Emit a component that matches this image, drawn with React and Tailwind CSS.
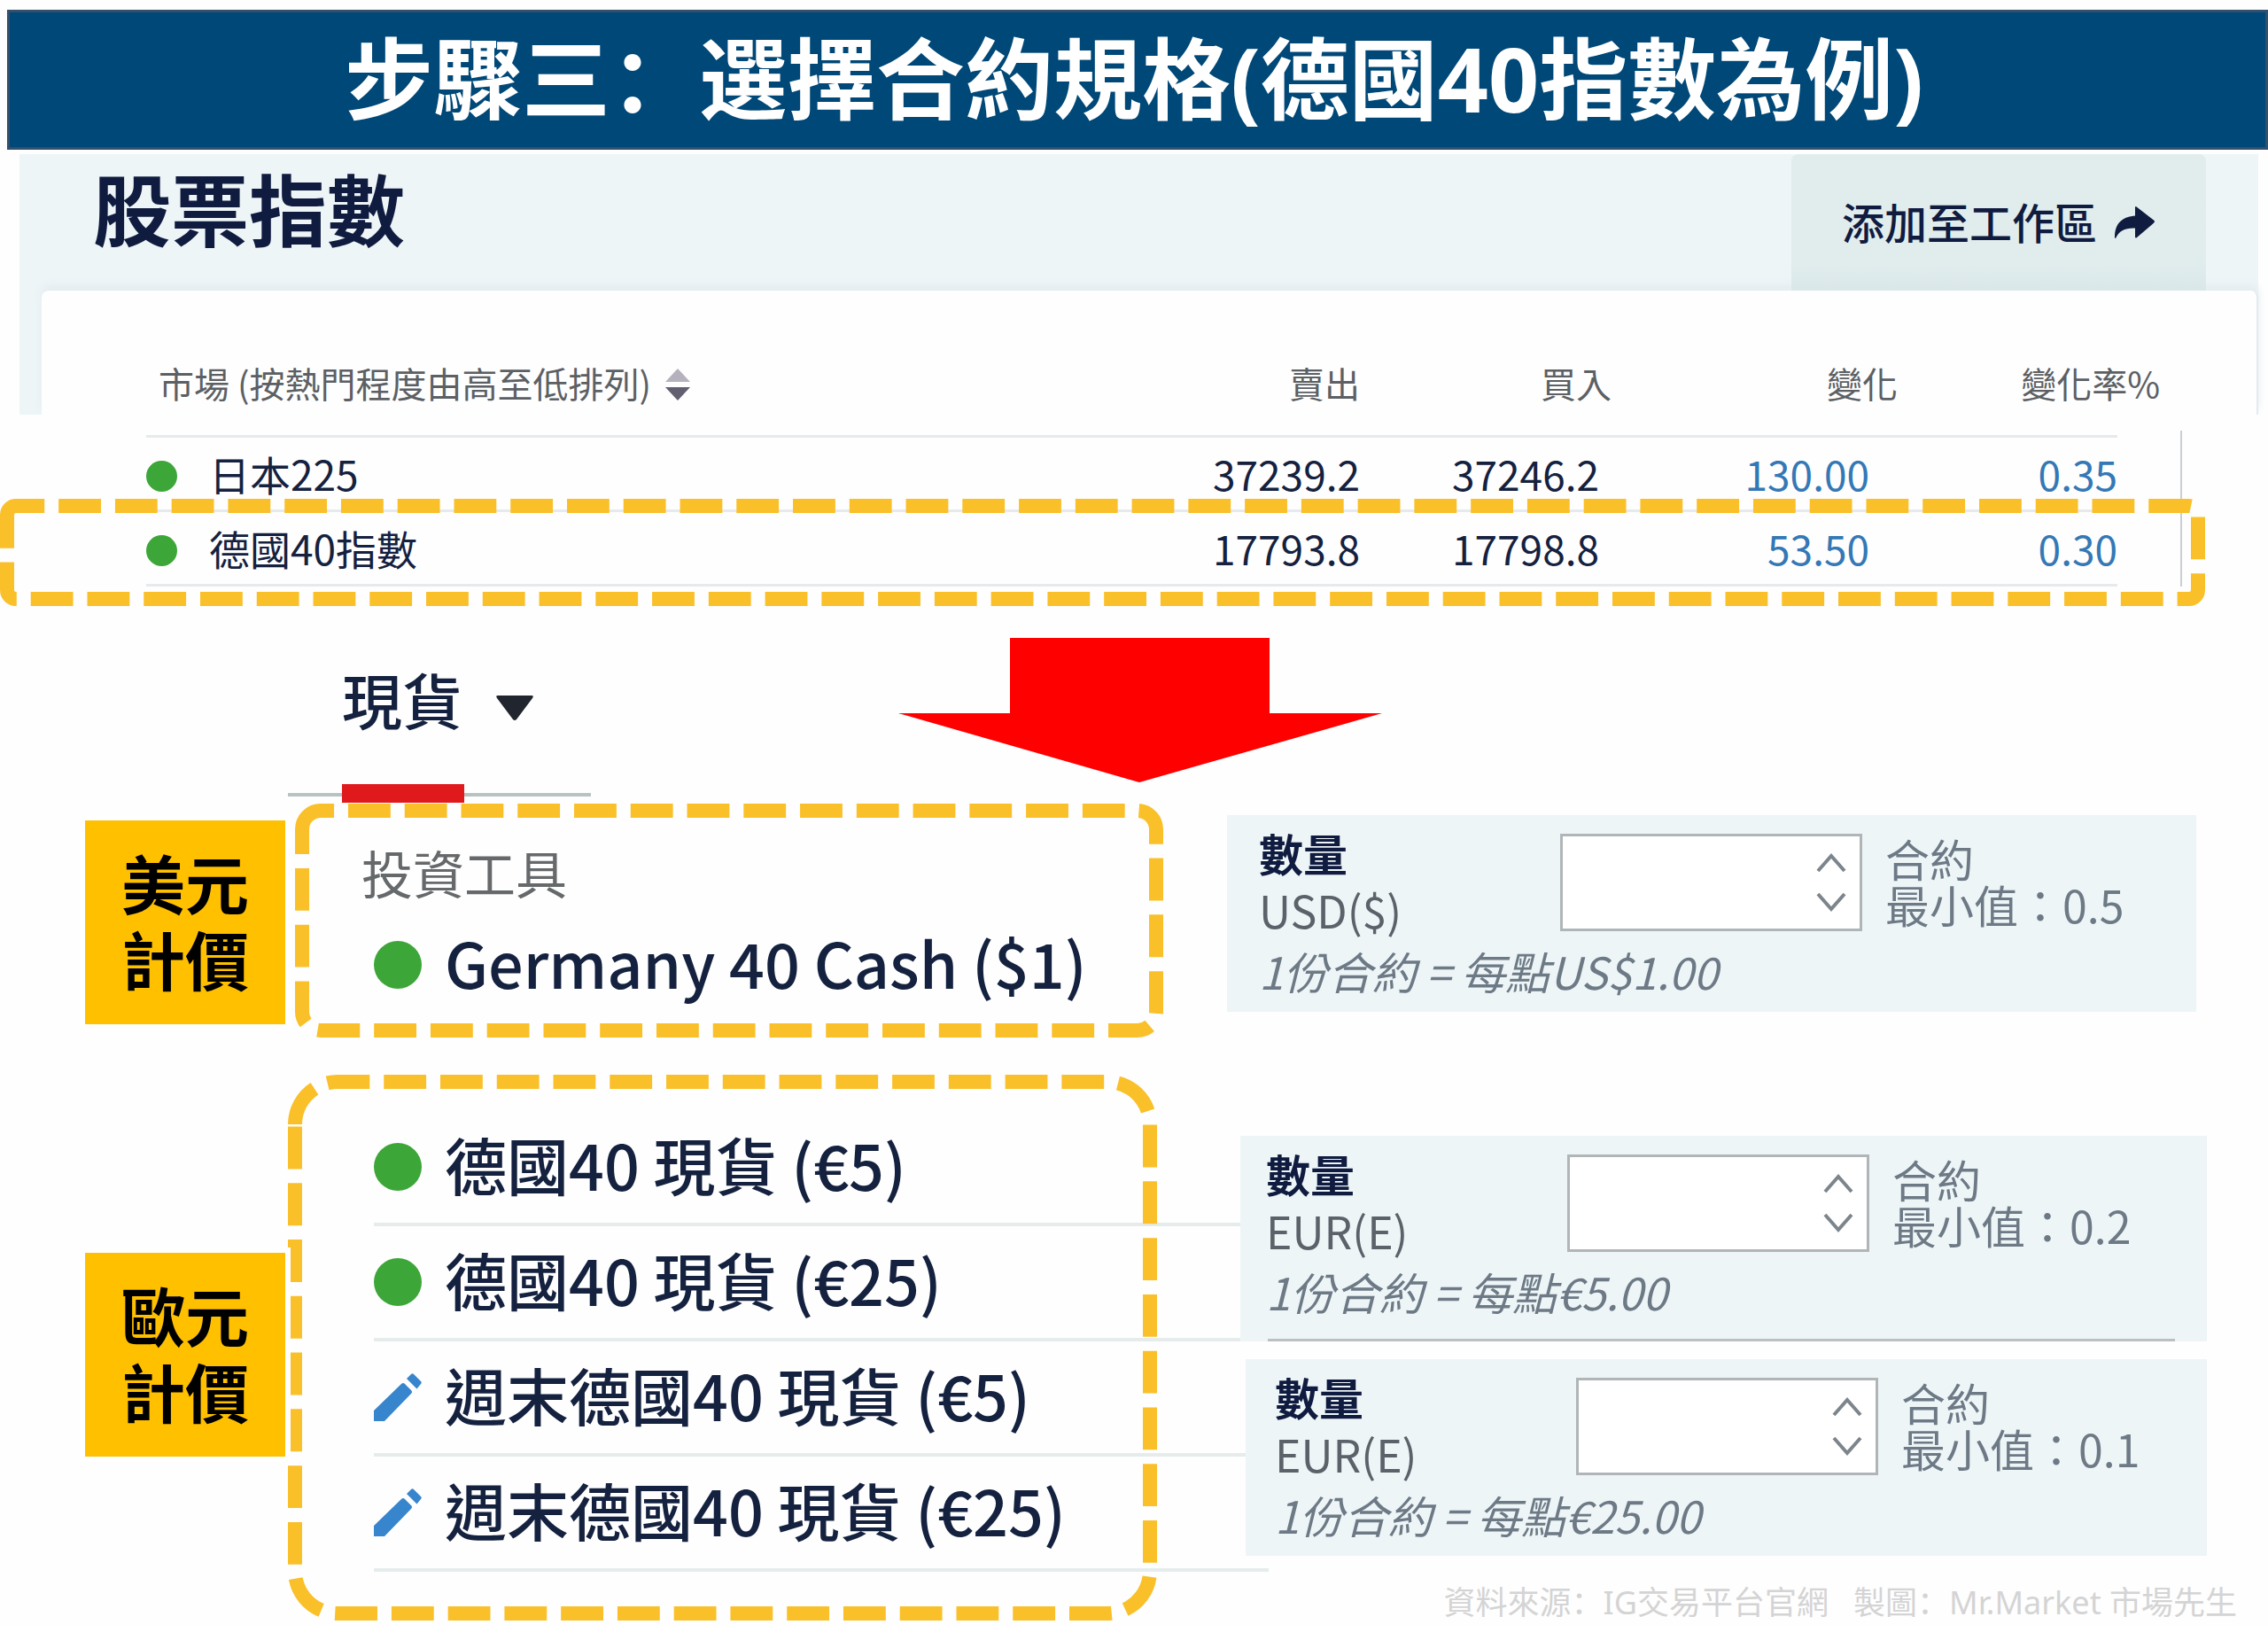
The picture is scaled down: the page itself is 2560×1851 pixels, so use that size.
import React from "react";

const quotes = [
  { name: "日本225", sell: "37239.2", buy: "37246.2", change: "130.00", percent: "0.35" },
  { name: "德國40指數", sell: "17793.8", buy: "17798.8", change: "53.50", percent: "0.30" },
];

const euroInstruments = [
  { name: "德國40 現貨 (€5)", weekend: false },
  { name: "德國40 現貨 (€25)", weekend: false },
  { name: "週末德國40 現貨 (€5)", weekend: true },
  { name: "週末德國40 現貨 (€25)", weekend: true },
];

/* Dashed highlight outline; the dashes start at the left end of the top-left corner and run clockwise. */
function DashedFrame({ className, w, h, r }) {
  const l = 8;
  const t = 8;
  const right = w - 8;
  const b = h - 8;
  const d = `M${l} ${t + r}A${r} ${r} 0 0 1 ${l + r} ${t}H${right - r}A${r} ${r} 0 0 1 ${right} ${t + r}V${b - r}A${r} ${r} 0 0 1 ${right - r} ${b}H${l + r}A${r} ${r} 0 0 1 ${l} ${b - r}Z`;
  return (
    <svg className={className} viewBox={`0 0 ${w} ${h}`} preserveAspectRatio="none" fill="none" aria-hidden="true">
      <path d={d} stroke="#fac02a" strokeWidth="16" strokeDasharray="47.82 15.94" />
    </svg>
  );
}

function Pencil() {
  return (
    <svg className="h-[54px] w-[54px] shrink-0" viewBox="0 0 54 54" fill="#3785cd" aria-hidden="true">
      <path d="M0 42 31 12Q33 10 35 12L42 19Q44 21 42 23L12 54H0Z" />
      <path d="M37 6 42 1Q43.500 -.5 45 1L53 9Q54.500 10.500 53 12L48.500 17.500Z" />
    </svg>
  );
}

function CurrencyLabel({ currency, className }) {
  return (
    <div className={"relative w-[226px] shrink-0 bg-[#ffc000] pt-[26px] pb-[32px] text-center text-[72px] leading-[86px] font-bold text-black ring-[6px] ring-white " + className}>
      {currency}
      <br />
      計價
    </div>
  );
}

function OrderPanel({ id, currency, minimum, note, className, children }) {
  return (
    <section className={"relative bg-[#edf5f7] pt-[10px] text-[50px] " + className}>
      <div className="flex items-start">
        <label htmlFor={id} className="w-[340px] shrink-0 leading-[64px] text-[#5b6269]">
          <span className="block font-bold text-[#101b40]">數量</span>
          <span className="block">{currency}</span>
        </label>
        <div className="mt-[11px] flex h-[110px] w-[341px] shrink-0 border-[3px] border-[#b0b6b7] bg-white">
          <input id={id} type="text" className="min-w-0 flex-1 bg-transparent px-4 outline-none" />
          <div className="flex w-[64px] flex-col items-center justify-center gap-[16px]">
            <button type="button" aria-label="增加" className="h-[28px] w-[40px]">
              <svg viewBox="0 0 40 28" fill="none" stroke="#7d858c" strokeWidth="4">
                <path d="M5 23 20 6 35 23" />
              </svg>
            </button>
            <button type="button" aria-label="減少" className="h-[28px] w-[40px]">
              <svg viewBox="0 0 40 28" fill="none" stroke="#7d858c" strokeWidth="4">
                <path d="M5 5 20 22 35 5" />
              </svg>
            </button>
          </div>
        </div>
        <p className="mt-[12px] ml-[26px] leading-[52px] whitespace-nowrap text-[#6d7a86]">
          合約
          <br />
          最小值：{minimum}
        </p>
      </div>
      <p className="pb-[10px] leading-[74px] text-[#6d7a86] italic">{note}</p>
      {children}
    </section>
  );
}

export default function App() {
  return (
    <main className="w-full overflow-hidden bg-[#fefefe] pt-[11px] font-['Noto_Sans_CJK_TC','Noto_Sans_CJK_SC',sans-serif] text-[#14213f]">
      <header className="ml-2 flex h-[158px] items-center justify-center border-[3px] border-[#33506d] bg-[#004877] pr-2 pb-[4px]">
        <h1 className="font-['Open_Sans','Noto_Sans_CJK_SC',sans-serif] text-[100px] leading-[140px] font-bold whitespace-nowrap text-white">
          步驟三：選擇合約規格(德國40指數為例)
        </h1>
      </header>

      <section className="mt-[5px] mr-[11px] ml-[22px] h-[294px] bg-[#edf5f7]">
        <div className="flex h-[154px] items-start justify-between pr-[59px] pl-[83px]">
          <h2 className="text-[88px] leading-[118px] font-bold text-[#101b40]">股票指數</h2>
          <button type="button" className="flex h-full w-[468px] items-center justify-center gap-[20px] rounded-t-lg bg-linear-to-b from-[#e1eded] from-80% to-[#dae7e9] pb-[4px] text-[48px] font-medium text-[#101b40]">
            添加至工作區
            <svg className="mt-[4px] h-[36px] w-[46px]" viewBox="0 0 46 36" fill="#101b40" aria-hidden="true">
              <path d="M23 1.500Q23 -1 25 .8L44 15.500Q46 17 44 18.800L25 35Q23 36.500 23 34V24.500C12 24 5 27 1 36Q0 36.500 0 34C0 20 8 11.500 23 10.500Z" />
            </svg>
          </button>
        </div>

        <div className="ml-[25px] h-[140px] rounded-t-lg border-r-2 border-[#e3ebee] bg-[#fefefe] pr-[157px] pl-[118px] shadow-[0_-6px_10px_#e4ecf0]">
          <div className="relative">
            <table className="w-full table-fixed border-collapse">
              <colgroup>
                <col />
                <col className="w-[280px]" />
                <col className="w-[270px]" />
                <col className="w-[305px]" />
                <col className="w-[280px]" />
              </colgroup>
              <thead>
                <tr className="h-[164px] border-b-[3px] border-[#e6eaec] text-[40px] leading-[60px] text-[#5c6064]">
                  <th className="pb-[29px] pl-[14px] text-left align-bottom font-normal whitespace-nowrap">
                    <button type="button" className="flex items-center gap-[16px]">
                      市場 (按熱門程度由高至低排列)
                      <svg className="mt-[4px] h-[38px] w-[28px]" viewBox="0 0 28 38" aria-hidden="true">
                        <path d="M14 1 28 16H0Z" fill="#b5b2be" />
                        <path d="M0 22H28L14 37Z" fill="#625f70" />
                      </svg>
                    </button>
                  </th>
                  <th className="pb-[29px] text-right align-bottom font-normal">賣出</th>
                  <th className="pb-[29px] text-right align-bottom font-normal">
                    <span className="-mr-[14px]">買入</span>
                  </th>
                  <th className="pb-[29px] text-right align-bottom font-normal">
                    <span className="-mr-[32px]">變化</span>
                  </th>
                  <th className="pb-[29px] text-right align-bottom font-normal whitespace-nowrap">
                    <span className="-mr-[48px]">變化率%</span>
                  </th>
                </tr>
              </thead>
              <tbody>
                {quotes.map((q) => (
                  <tr key={q.name} className="h-[84px] border-b-[3px] border-[#e6eaec] text-right text-[46px] leading-[76px]">
                    <td className="text-left">
                      <div className="flex items-center gap-[36px]">
                        <span className="mt-[6px] h-[35px] w-[35px] rounded-full bg-[#3da639]" />
                        {q.name}
                      </div>
                    </td>
                    <td>{q.sell}</td>
                    <td>{q.buy}</td>
                    <td className="text-[#3478b5]">{q.change}</td>
                    <td className="text-[#3478b5]">{q.percent}</td>
                  </tr>
                ))}
              </tbody>
            </table>
            <div className="absolute top-[158px] -right-[73px] bottom-0 w-[2px] bg-[#c9d0d2]" />
            <DashedFrame className="absolute top-[235px] -left-[165px] h-[121px] w-[calc(100%+264px)]" w={2489} h={121} r={10} />
          </div>
        </div>
      </section>

      <div className="mt-[252px] flex items-start pl-[325px]">
        <div className="relative w-[342px] shrink-0 pl-[61px]">
          <button type="button" className="flex h-[165px] items-start gap-[38px] pt-[21px] text-[68px] leading-[96px] font-medium">
            現貨
            <svg className="mt-[44px] h-[28px] w-[42px]" viewBox="0 0 42 28" fill="#20252e" aria-hidden="true">
              <path d="M2 0H40Q43 0 41 3L23 27Q21 29 19 27L1 3Q-1 0 2 0Z" />
            </svg>
          </button>
          <div className="h-[21px] w-[138px] bg-[#e0191d]" />
          <div className="absolute bottom-[7px] left-0 h-[4px] w-[61px] bg-[#b9c2c2]" />
          <div className="absolute right-0 bottom-[7px] h-[4px] w-[143px] bg-[#b9c2c2]" />
        </div>
        <svg className="ml-[347px] h-[163px] w-[546px]" viewBox="0 0 546 163" fill="#ff0000" aria-hidden="true">
          <path d="M126 0H419V85H546L272 163 0 85H126Z" />
        </svg>
      </div>

      <div className="mt-px flex items-start pr-[81px] pl-[96px]">
        <CurrencyLabel currency="美元" className="mt-[19px]" />
        <div className="relative ml-[11px] h-[264px] w-[980px] shrink-0 pt-[37px] pl-[75px]">
          <p className="text-[58px] leading-[80px] text-[#66696b]">投資工具</p>
          <div className="mt-[12px] ml-[14px] flex items-center gap-[26px] text-[70px] leading-[100px] font-medium">
            <span className="mt-[6px] h-[54px] w-[54px] rounded-full bg-[#3da639]" />
            Germany 40 Cash ($1)
          </div>
          <DashedFrame className="absolute inset-0 h-full w-full" w={980} h={264} r={21} />
        </div>
        <OrderPanel id="qty-usd" currency="USD($)" minimum="0.5" note="1份合約 = 每點US$1.00" className="mt-[13px] ml-[72px] flex-1 pl-[36px]" />
      </div>

      <div className="mt-[42px] flex items-start pr-[69px] pl-[96px]">
        <CurrencyLabel currency="歐元" className="z-10 mt-[201px]" />
        <div className="relative ml-[3px] h-[616px] w-[981px] shrink-0 pt-[41px] pl-[97px]">
          <ul className="text-[70px] leading-[120px] font-medium">
            {euroInstruments.map((item) => (
              <li key={item.name} className="-mr-[100px] flex h-[130px] items-start gap-[26px] border-b-[4px] border-[#e6ecec] last:-mr-[126px]">
                <span className="mt-[36px]">
                  {item.weekend ? <Pencil /> : <span className="block h-[54px] w-[54px] rounded-full bg-[#3da639]" />}
                </span>
                {item.name}
              </li>
            ))}
          </ul>
          <DashedFrame className="absolute inset-0 h-full w-full" w={981} h={616} r={48} />
        </div>
        <div className="ml-[94px] flex-1 pt-[69px]">
          <OrderPanel id="qty-eur-5" currency="EUR(E)" minimum="0.2" note="1份合約 = 每點€5.00" className="pl-[29px]">
            <div className="mt-[7px] mr-[36px] ml-[2px] h-[3px] bg-[#b9c1c3]" />
          </OrderPanel>
          <OrderPanel id="qty-eur-25" currency="EUR(E)" minimum="0.1" note="1份合約 = 每點€25.00" className="mt-[20px] ml-[6px] pl-[33px]" />
          <footer className="mt-[27px] -mr-[34px] text-right font-['Noto_Sans','Noto_Sans_CJK_SC',sans-serif] text-[36px] leading-[52px] whitespace-pre text-[#d4d4d4]">
            {"資料來源：IG交易平台官網   製圖：Mr.Market 市場先生"}
          </footer>
        </div>
      </div>
    </main>
  );
}
